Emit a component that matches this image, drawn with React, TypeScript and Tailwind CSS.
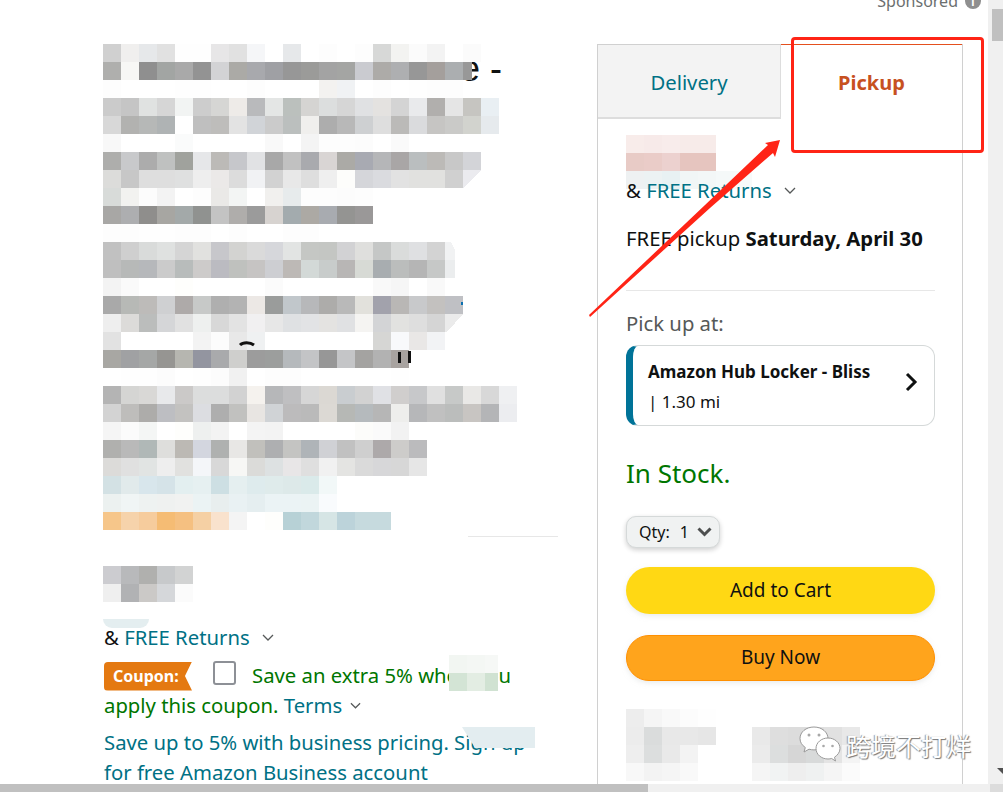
const titleRows = [
  'd0d0d0 f0efee e6e8ea e1e1e1 fefefe fefefe e7e6e7 e1e1e1 f5f6f8 ffffff e6e8ea ffffff fdfdfd ffffff fdfdfd d7d8d7 f3f3f1 fbfbfb f3f3f3 ffffff fbfbfb',
  'afafad f7f7f5 8f8f8f a2a5a3 a9a9a9 939393 d3d3d5 abaaa6 a8a9ad 9fa0a4 979797 9b9b99 a3a3a3 a4a5a3 cacbd0 adaba8 aeafb1 979797 a49f9c abaeb0',
  'fdfdfd ffffff ffffff ffffff fefefe fefefe ffffff ffffff fdfdfd ffffff ffffff ffffff f3f2f0 f0f2f4 ffffff fdfdfd ffffff fefefe fdfdfd fdfdfd',
  'cbcbcb c5c5c5 e0e2e1 d6d6d6 f2f4f3 cdcdcd d6d6d4 eeebe8 b9babc e4e6e5 bbc0bd d5d4d2 dcdede d6d6d6 e0e1e3 e4e2e0 d4d4d4 e9eaec b1afad e5e5e5 c6c5c1 e9eff3',
  'd8d8d8 b2b2b0 b6b8b7 afb3b4 ffffff bfbfbf bebdbb e3e3e3 d1d4d8 cbcbcb bbbfbe f0efed adadad b8b8b8 ced0d2 dedede bbbab8 dadbdd c6c5c3 cacac8 d2d3ce e6eaed',
  'f8f8f8 ffffff ffffff ffffff fafbfb ffffff ffffff ffffff ffffff f9f9f9 ffffff f4f4f4 fdfdfd fdfdfd fcfcfc ffffff fafafa',
  'aeaeac c8c9cb acacac bfc1c0 a0a29d e6e7e9 bcbab7 c6c7cb e1e2e4 a8a8a8 c1c1c1 a9aaae d9d5d4 abaaa6 a8aab2 b5b6b8 a9a6a6 babebf bcbab7 c8c8c8 d3d4d8',
  'dcdcda c7c7c7 dedede dedede dfe0e0 eeeeee ebe9e8 dcdcdc f1f2f4 d2d2d2 e8e8e8 dedede efefef fdfdfb d5d6da dadbdf e2e2e2 e1e1df e1e1df d0d0d0 ebebef',
  'd8dbd9 f2f2f0 fcfcfc f3f3f3 ffffff fdfdfd eae9e7 f3f5f4 ffffff f1f0ee e7ebec fdfdfd fdfdfd fcfcfc fdfdfd',
  'a8a7a5 adaeb0 8f8e8c a7a6a2 a3a9a9 909290 c3c3c3 afadab 9b9b9b d7d3d0 a3abae aca9a4 a8abb0 949492 9a9898',
  'fdfdfd fdfdfd fefefe fefefe fdfdfd fdfdfd ffffff fdfdfd ffffff ffffff fdfdfd fdfdfd',
  'c1c1c1 cfcfcf d9dbda dfe1e0 d5d5d5 e1e1df c7c7cb d3d3d1 dadada d6d7db e2e4e3 c5c7c4 c4c6c3 d2d2d4 dfdfdd c5c7c6 dadcdb dfe0e2 d3d3d3',
  'bfbfbf b7b9b8 b6b8bb cbcbcb b8bcbb cdcbca bbbbc1 bfc1be c6c4c3 cdced2 bdb9b6 d3d9d7 c8cccb b8b6b5 d7dad5 a8adb0 bbbdbc b5b5b5 c6c8c7 ebedee',
  'f3f3f3 fafafa ffffff ffffff fefefc ffffff ffffff ffffff ffffff fbfbfb ffffff ffffff ffffff ffffff ffffff f9f9f9 f6f6f6 ffffff f9f9f9',
  'a9a9a9 b7b9b6 bdbbb9 cfd0d2 aeaaa9 c7c9c8 afafaf b3b3b3 ece8e5 9a9c9b c1c7cb b7b8ba adacaa b9b9b9 e2e1dc a2a2ac b9b7b5 c8c9cb c3c1bf bfc0c4',
  'eeeeee dcdbd9 bbbdbc d5d6d8 e1e1e1 eef0ef d8d8d8 e3e3e3 f1f0f1 e7e7e7 dfe1e3 e2e3e5 e4e3e1 e0e1e3 f5f4f2 d3d4d6 e2e2e0 dedede d5d5d5 ebebeb',
  'e2e2e2 ffffff ffffff ffffff ffffff f3f3f3 fcfcfc e8e8e8 eff1f2 ffffff ffffff ffffff ffffff ffffff ffffff d6d6d4 f8f9fb e9e7e6 f2f3f5',
  'a8a7a3 a0a1a3 a5a7a6 969592 b6b6b0 9395a0 a9aaac cfcfcd 9c9c9c 9c9e9d b5b9bc c3c4c6 979797 c4c5c7 a4a3a1 b2b2b2 a8a3a0 ffffff',
  'ffffff fefefe fefefe fcfcfc ffffff fefefe fcfcfc f1f1f1 ffffff fdfdfd fdfdfd ffffff ffffff ffffff ffffff ffffff fefefe',
  'b4b4b4 d5d5d3 d9d8d6 e8e9eb cbc9c8 dcdddd dcdddd d2d2d2 f5f2ee b6b7b9 bfbfc1 d6d6d6 dbd8d3 c9cdd0 d2d2d2 e0e1e5 d0cecd c7c8ca e0e0e0 c7c9c8 e9e8e6 d8d8d8 eff0f2',
  'd3d3d3 bebdbb adacaa bdbec2 c3c2c0 dcdde1 aeaeae c1c1bf e8e5e2 d0d3d6 bcbbbc bababa dcd9d4 b6b8b5 b5babd b6b6b6 eeeeec b6b7b9 c0c0c0 bbbdbc c8c5c2 b4b5b7 ecedf0',
  'f5f5f5 fbfbfb f4f6f5 ffffff fefefc eef0ef f3f3f3 ffffff f4f4f4 f3f3f3 ffffff ffffff ffffff ffffff fcfcfa fafafa f2f2f2',
  'b0b0ae b9b9b9 b0b8b7 dededc bcb9b4 d3d6df afb1b0 e8e7e5 c1c0bc aeafb1 c4c4c2 afb4b8 d0d1d5 c1c1c1 cfcfcf ada9aa cdccca bbbbbd',
  'dcdbd9 e0e0e0 e1e4e3 eeeeee e1e1df f4f6f9 d8d8d8 f7f7f5 dbdbd9 dde1e2 e8e6e7 dfdfdf f1f1f1 e4e4e2 dadada d7d7d9 d7d7d7 e6e6e6',
  'd3e1e4 e1eaeb d8e6ec d5e3e8 e3eff0 e6f0f1 cddfe3 e5eff0 deebed dfebeb dde9e9 daeaea f2f8f8',
  'ecf1f0 f0f5f5 eef2f1 eff1f0 f1f2f1 ebf3f4 e8eeee e9f1f3 e5eef0 ebf3f5 ebf3f5 ebf3f4 f9fbfd',
  'f6c68a f6d3ab f6cc9d f5bc74 f5c081 f5d0a4 f9e2cd f4f4f4 ffffff fefefc b7d1d6 c1d7dc d6e5e5 bcd3da c6dade c6dade',
]

const priceRows = ['ccccd0 b8b9bb b0b0ae c7c9cb d2d3d3', 'efefef b1b2b4 cbc9c7 d5d7da fbfbfb']
const sidePriceRows = [
  'f8ecea f7eae9 f8eceb f7ebe9 f7ebe9',
  'e8cbc6 eaccc8 ecd1cf e6c5bf e6c5bf',
  'eef1f2 ecf2f3 e8f1f3 f1f6f6 f3f7f7 f5f9f9 f7fafa',
]
const sideBadgeRows = [
  'ededed f5f5f5 f9f9f9 fcfcfc fefefe',
  'ececec dadcdc e8e8e8 e8e8e8 e6e6e6',
  'eeeeee dcdede e9e9e9 f3f3f3 ffffff',
  'f8f8f8 f3f3f3 f5f5f5 f9f9f9 ffffff',
]
const sideSellerRows = [
  'e9e9e9 dedede dcdcdc dedede e1e1e1 e8e8e8',
  'ebebeb dcdede d6d6d6 d8dada e4e4e4 f4f4f4',
  'f5f5f5 f1f3f3 eeeeee eff1f1 f5f5f5 fbfbfb',
]

function Mosaic({ rows, className, children }: { rows: string[]; className?: string; children?: React.ReactNode }) {
  const width = Math.max(...rows.map((r) => r.split(' ').length)) * 18
  return (
    <svg width={width} height={rows.length * 18} className={className} shapeRendering="crispEdges">
      {rows.map((row, y) =>
        row.split(' ').map((c, x) => <rect key={`${x}-${y}`} x={x * 18} y={y * 18} width={18} height={18} fill={`#${c}`} />),
      )}
      {children}
    </svg>
  )
}

function Chevron({ className }: { className?: string }) {
  return (
    <svg viewBox="0 0 12 7" className={className} fill="none" stroke="currentColor" strokeWidth="1.3">
      <path d="M1 1l5 5 5-5" />
    </svg>
  )
}

function WeChat() {
  return (
    <svg width="42" height="38" viewBox="0 0 42 38" className="shrink-0">
      <path d="M15 1C7 1 1 6 1 12.500c0 3.800 2 6.800 5.300 9l-1.300 4.500 5-2.800c1.600.4 3.300.7 5 .7 8 0 14-5.200 14-11.400S23 1 15 1z" fill="#fff" stroke="#9a9a9a" />
      <path d="M29 12c-6.600 0-12 4.600-12 10.500S22.400 33 29 33c1.300 0 2.500-.2 3.700-.5l3.800 2.500-1-3.800c3-1.900 5.500-5 5.500-8.700C41 16.600 35.600 12 29 12z" fill="#fff" stroke="#9a9a9a" />
      <circle cx="10" cy="9" r="1.500" fill="#a8a8a8" />
      <circle cx="20" cy="9" r="1.500" fill="#a8a8a8" />
      <circle cx="24.500" cy="20" r="1.300" fill="#a8a8a8" />
      <circle cx="33.500" cy="20" r="1.300" fill="#a8a8a8" />
    </svg>
  )
}

export default function App() {
  return (
    <div className="relative flex h-[792px] w-[1003px] overflow-hidden bg-white font-['Noto_Sans',sans-serif] text-[20.3px] leading-[30px] text-[#0f1111]">
      <div className="flex w-[988px] flex-col">
        <div className="flex min-h-0 flex-1 flex-col overflow-hidden">
          {/* sponsored row, cut by the top of the window */}
          <div className="-mt-[10px] flex h-[54px] shrink-0 items-start justify-end gap-[7px] pr-[7px]">
            <span className="text-[16px] leading-[22px] text-[#6b6f6f]">Sponsored</span>
            <span className="mt-[3px] flex h-[16px] w-[16px] items-center justify-center rounded-full bg-[#8f8f8f] text-[11px] font-bold leading-none text-white">i</span>
          </div>

          <div className="flex min-h-0 flex-1">
            {/* product details */}
            <div className="ml-[103px] w-[455px] shrink-0">
              <div className="relative h-[486px]">
                <span className="absolute left-[357px] top-[3px] whitespace-pre font-['Liberation_Sans',sans-serif] text-[36px] leading-[44px] text-[#0f1111]">e -</span>
                <Mosaic rows={titleRows} className="relative block">
                  {/* end of the blurred title line, leaves half of the e showing */}
                  <rect x="360" y="18" width="9" height="18" fill="#989898" />
                  <rect x="360" y="0" width="11" height="18" fill="#fbfbfb" />
                  {/* corners of the blur patches */}
                  <polygon points="379,125 379,145 359,145" fill="#fff" />
                  <rect x="352" y="216" width="12" height="18" fill="#fff" />
                  <polygon points="342,198 348,198 352,206 352,216 342,216" fill="#f1f2f3" />
                  <polygon points="361,269 361,289 343,289" fill="#fff" />
                  <rect x="358" y="258" width="2" height="3" fill="#0a70b0" />
                  <path d="M137 301c3-3 10-3 14 0" stroke="#111" strokeWidth="3" fill="none" shapeRendering="auto" />
                  <rect x="295" y="308" width="3" height="11" fill="#111" />
                  <rect x="305" y="307" width="3" height="12" fill="#111" />
                </Mosaic>
              </div>
              <div className="ml-[365px] mt-[6px] h-px bg-[#e7e7e7]" />
              <Mosaic rows={priceRows} className="mt-[29px] block" />

              <div className="relative mt-[20px] flex items-center pl-px">
                <div className="absolute left-0 top-[-3px] h-[9px] w-[46px] rounded-b-full bg-[#e4eef0]" />
                <span className="relative">&amp;&nbsp;</span>
                <span className="relative text-[#007185]">FREE Returns</span>
                <Chevron className="ml-[12px] h-[7px] w-[12px] text-[#565959]" />
              </div>

              <div className="relative mt-[8px] pl-px text-[#007600]">
                <div className="flex h-[30px] items-center">
                  <span className="mt-[2px] flex h-[29px] w-[88px] items-center rounded-l-[4px] bg-[#e47911] pl-[9px] text-[16px] font-bold text-white [clip-path:polygon(0_0,100%_0,92%_50%,100%_100%,0_100%)]">
                    Coupon:
                  </span>
                  <span className="mb-[4px] ml-[21px] h-[24px] w-[23px] rounded-[3px] border-2 border-[#8d9096] bg-white" />
                  <span className="ml-[16px] whitespace-nowrap">Save an extra 5% when you</span>
                </div>
                <div className="flex items-center">
                  <span>apply this coupon.&nbsp;</span>
                  <span className="text-[#007185]">Terms</span>
                  <Chevron className="ml-[8px] h-[7px] w-[11px] text-[#565959]" />
                </div>
                <div className="absolute left-[346px] top-[-5px] h-[36px] w-[49px] overflow-hidden">
                  <Mosaic rows={['f2f6f2 f4f7f4 f6f8f6', 'd3e4d5 e3ede3 d0e2d2']} />
                </div>
              </div>

              <div className="relative mt-[7px] pl-px text-[#007185]">
                <p className="whitespace-nowrap">Save up to 5% with business pricing. Sign up</p>
                <p className="whitespace-nowrap">for free Amazon Business account</p>
                <div className="absolute left-[359px] top-0 h-[21px] w-[73px] bg-[#e3edf0] [clip-path:polygon(0_0,100%_0,100%_100%,18%_100%)]" />
              </div>
            </div>

            {/* buy box */}
            <div className="ml-[39px] flex w-[366px] shrink-0 flex-col border-x border-t border-x-[#d0d0d0] border-t-[#d0d0d0]">
              <div className="flex h-[74px] shrink-0 text-center">
                <div className="flex w-[183px] items-start justify-center border-b-2 border-r border-b-[#dddddd] border-r-[#dddddd] bg-[#f3f3f3] pt-[22px] text-[#007185]">
                  Delivery
                </div>
                <div className="-mt-px flex flex-1 items-start justify-center border-t border-t-[#e4501e] pt-[23px] text-[20px] font-bold text-[#c7511f]">
                  Pickup
                </div>
              </div>

              <div className="flex flex-col pl-[28px] pr-[27px]">
                <Mosaic rows={sidePriceRows} className="mt-[16px] block" />
                <div className="-mt-[14px] flex items-center">
                  <span>&amp;&nbsp;</span>
                  <span className="text-[#007185]">FREE Returns</span>
                  <Chevron className="ml-[12px] h-[7px] w-[12px] text-[#565959]" />
                </div>
                <p className="mt-[18px] whitespace-nowrap">
                  FREE pickup <span className="font-bold">Saturday, April 30</span>
                </p>
                <div className="mt-[37px] h-px bg-[#e7e7e7]" />
                <p className="mt-[17px] text-[#565959]">Pick up at:</p>
                <div className="mt-[7px] flex h-[81px] items-center justify-between rounded-[12px] border border-[#d5d9d9] border-l-[7px] border-l-[#007398] pl-[15px] pr-[16px]">
                  <div className="mt-[2px]">
                    <p className="text-[17px] font-bold leading-[24px]">Amazon Hub Locker - Bliss</p>
                    <p className="mt-[6px] text-[17px] leading-[24px]">| 1.30 mi</p>
                  </div>
                  <svg width="14" height="20" viewBox="0 0 14 20" fill="none" stroke="#0f1111" strokeWidth="3" className="mb-[7px]">
                    <path d="M3 2l8 8-8 8" />
                  </svg>
                </div>
                <p className="mt-[29px] text-[26px] leading-[36px] text-[#007600]">In Stock.</p>
                <div className="mt-[25px] flex h-[32px] w-[94px] items-center rounded-[10px] border border-[#d5d9d9] bg-[#f0f2f2] pl-[12px] text-[16px] text-[#0f1111] shadow-[0_2px_5px_rgba(15,17,17,0.2)]">
                  <span>Qty:</span>
                  <span className="ml-[10px]">1</span>
                  <svg width="15" height="10" viewBox="0 0 15 10" fill="none" stroke="#4d4f4f" strokeWidth="3" className="ml-[8px]">
                    <path d="M1.500 1.500l6 6 6-6" />
                  </svg>
                </div>
                <button className="mt-[19px] h-[47px] rounded-full bg-[#ffd814] pb-[2px] text-[19px] text-[#0f1111] shadow-[0_2px_5px_rgba(213,217,217,0.5)]">Add to Cart</button>
                <button className="mt-[21px] h-[46px] rounded-full border border-[#ff8f00] bg-[#ffa41c] pb-[2px] text-[19px] text-[#0f1111] shadow-[0_2px_5px_rgba(213,217,217,0.5)]">Buy Now</button>
                <div className="mt-[28px] flex">
                  <Mosaic rows={sideBadgeRows} />
                  <Mosaic rows={sideSellerRows} className="ml-[36px] mt-[18px]" />
                </div>
              </div>
            </div>
          </div>
        </div>

        {/* horizontal scrollbar */}
        <div className="flex h-[8px] shrink-0 bg-[#f0f0f0]">
          <div className="w-[648px] bg-[#c0c0c0]" />
        </div>
      </div>

      {/* vertical scrollbar */}
      <div className="flex w-[15px] flex-col items-end bg-[#f0f0f0]">
        <div className="mt-[9px] h-[32px] w-[11px] bg-[#c0c0c0]" />
        <div className="mt-auto h-0 w-0 border-t-[6px] border-l-[6px] border-t-[#505050] border-l-transparent" />
        <div className="mt-[10px] h-[8px] w-[13px] bg-[#dcdcdc]" />
      </div>

      {/* annotation drawn over the screenshot */}
      <div className="absolute left-[791px] top-[37px] h-[116px] w-[193px] rounded-[4px] border-[3px] border-[#ff2416]" />
      <svg className="absolute left-[585px] top-[135px]" width="200" height="185" viewBox="0 0 200 185">
        <polygon points="195,5 180,8 183,10 120,70 4,180 5,182 125,73 188,18 190,22" fill="#ff2416" />
      </svg>

      {/* watermark */}
      <div className="absolute left-[799px] top-[726px] flex items-center gap-[5px]">
        <WeChat />
        <span className="font-['Noto_Sans_CJK_SC',sans-serif] text-[25px] leading-[36px] text-white [text-shadow:1px_1px_1px_#777,-1px_0_1px_#999]">跨境不打烊</span>
      </div>
    </div>
  )
}
